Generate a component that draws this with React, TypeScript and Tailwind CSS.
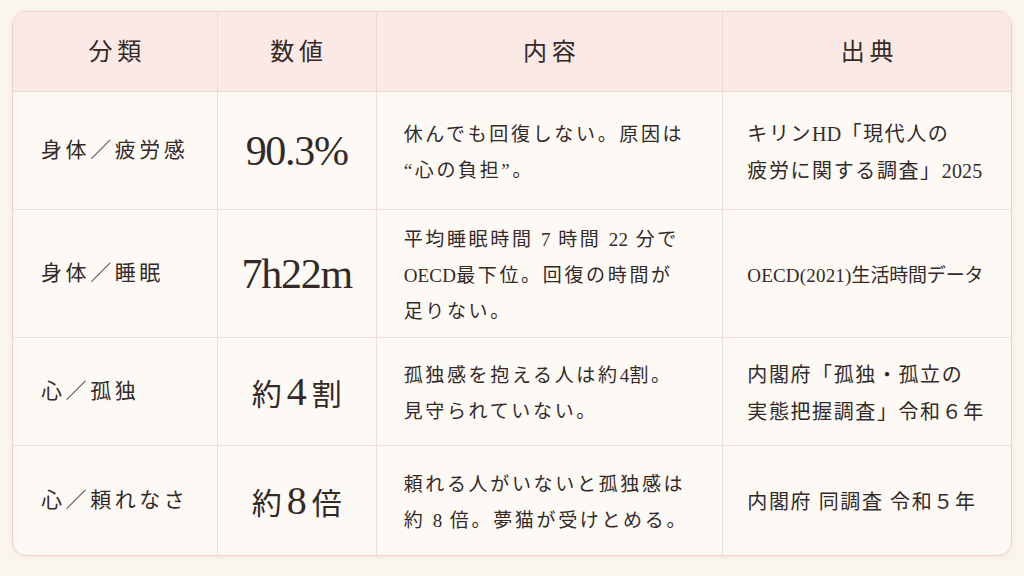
import React from "react";

interface Row {
  category: string;
  value: React.ReactNode;
  content: string[];
  source: string[];
  sourceTight?: boolean;
  height: string;
}

const Num = ({ children }: { children: React.ReactNode }) => (
  <span className="mx-[5px] text-[40px]">{children}</span>
);

// latin runs keep their natural spacing; only kana/kanji get tracked out
const Text = ({ line }: { line: string }) => (
  <>
    {line.split(/([A-Za-z0-9()%]+)/).map((part, i) =>
      /^[A-Za-z0-9()%]+$/.test(part) ? (
        <span key={i} className="tracking-[0.01em]">{part}</span>
      ) : (
        <React.Fragment key={i}>{part}</React.Fragment>
      )
    )}
  </>
);

const rows: Row[] = [
  {
    category: "身体／疲労感",
    value: <span className="text-[42px] tracking-[-0.03em]">90.3%</span>,
    content: ["休んでも回復しない。原因は", "“心の負担”。"],
    source: ["キリンHD「現代人の", "疲労に関する調査」2025"],
    height: "h-[118px]",
  },
  {
    category: "身体／睡眠",
    value: <span className="text-[42px] tracking-[-0.03em]">7h22m</span>,
    content: ["平均睡眠時間 7 時間 22 分で", "OECD最下位。回復の時間が", "足りない。"],
    source: ["OECD(2021)生活時間データ"],
    sourceTight: true,
    height: "h-[128px]",
  },
  {
    category: "心／孤独",
    value: (
      <span className="text-[30px]">
        約<Num>4</Num>割
      </span>
    ),
    content: ["孤独感を抱える人は約4割。", "見守られていない。"],
    source: ["内閣府「孤独・孤立の", "実態把握調査」令和６年"],
    height: "h-[108px]",
  },
  {
    category: "心／頼れなさ",
    value: (
      <span className="text-[30px]">
        約<Num>8</Num>倍
      </span>
    ),
    content: ["頼れる人がいないと孤独感は", "約 8 倍。夢猫が受けとめる。"],
    source: ["内閣府 同調査 令和５年"],
    height: "h-[109px]",
  },
];

const headers = ["分類", "数値", "内容", "出典"];
const cols = ["w-[205px]", "w-[159px]", "w-[347px]", "w-[288px]"];

export default function App() {
  return (
    <div className="min-h-screen w-full bg-[#fbf5ef] px-[12px] pt-[11px] font-['Liberation_Serif','Noto_Sans_CJK_JP',serif] text-[#332a28]">
      <div className="w-[1000px] overflow-hidden rounded-[14px] border border-[#eed2ce] bg-[#fdf9f5] shadow-[0_1px_4px_rgba(180,140,130,0.15)]">
        <div className="flex h-[80px] border-b border-[#efd6d2] bg-[#fbe9e5]">
          {headers.map((h, i) => (
            <div
              key={h}
              className={`${cols[i]} flex items-center justify-center text-[24px] tracking-[0.2em] ${
                i < 3 ? "border-r border-[#f0d9d5]" : ""
              }`}
            >
              <span className="pl-[0.2em]">{h}</span>
            </div>
          ))}
        </div>
        {rows.map((r, ri) => (
          <div
            key={r.category}
            className={`flex ${r.height} ${ri < rows.length - 1 ? "border-b border-[#f0ddd9]" : ""}`}
          >
            <div className={`${cols[0]} flex items-center border-r border-[#f0dcd8] pl-[28px] text-[21px] tracking-[0.17em]`}>
              {r.category}
            </div>
            <div className={`${cols[1]} flex items-center justify-center border-r border-[#f0dcd8] leading-none`}>
              {r.value}
            </div>
            <div className={`${cols[2]} flex flex-col justify-center border-r border-[#f0dcd8] pl-[27px] pt-[4px] text-[19px] leading-[36px] tracking-[0.14em]`}>
              {r.content.map((l) => (
                <div key={l} className="whitespace-nowrap">
                  <Text line={l} />
                </div>
              ))}
            </div>
            <div
              className={`${cols[3]} flex flex-col justify-center pl-[24px] pt-[4px] leading-[37px] ${
                r.sourceTight ? "text-[19px] tracking-[-0.01em]" : "text-[20px] tracking-[0.08em]"
              }`}
            >
              {r.source.map((l) => (
                <div key={l} className="whitespace-nowrap">
                  <Text line={l} />
                </div>
              ))}
            </div>
          </div>
        ))}
      </div>
    </div>
  );
}
